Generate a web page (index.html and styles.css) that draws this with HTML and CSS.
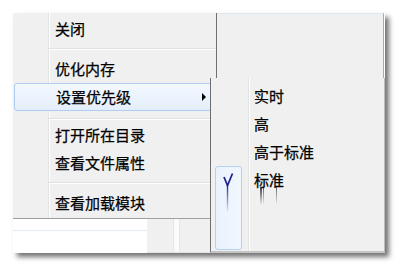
FILE: index.html
```html
<!DOCTYPE html>
<html>
<head>
<meta charset="utf-8">
<link rel="stylesheet" href="styles.css">
</head>
<body>
<div class="stage">
  <div class="backdrop">
    <div class="backdrop-line"></div>
  </div>
  <div class="filler"><span class="streak"></span></div>
  <div class="panel"></div>
  <div class="menu main">
    <div class="item">关闭</div>
    <div class="sep"></div>
    <div class="item">优化内存</div>
    <div class="item active">设置优先级<span class="arrow"></span></div>
    <div class="sep sep-short"></div>
    <div class="item">打开所在目录</div>
    <div class="item">查看文件属性</div>
    <div class="sep"></div>
    <div class="item">查看加载模块</div>
  </div>
  <div class="menu sub">
    <div class="item">实时</div>
    <div class="item">高</div>
    <div class="item">高于标准</div>
    <div class="item checked">标准<span class="ghost"></span></div>
    <div class="checkbox">
      <svg class="check" width="12" height="42" viewBox="0 0 12 42">
        <defs>
          <linearGradient id="fade" x1="0" y1="0" x2="0" y2="1">
            <stop offset="0" stop-color="#23238f"/>
            <stop offset="1" stop-color="#23238f" stop-opacity="0"/>
          </linearGradient>
        </defs>
        <path d="M1 4 L4.5 12.5 L9.5 0.5" fill="none" stroke="#23238f" stroke-width="1.8"/>
        <rect x="3.8" y="12" width="1.4" height="28" fill="url(#fade)"/>
      </svg>
    </div>
  </div>
</div>
</body>
</html>
```
FILE: styles.css
```css
html, body {
  margin: 0;
  padding: 0;
  background: #ffffff;
}
body {
  width: 400px;
  height: 268px;
  overflow: hidden;
  font-family: "Noto Sans CJK SC", "Noto Sans", sans-serif;
  font-size: 15px;
  color: #000;
  -webkit-text-stroke: 0.25px #000;
}
.stage {
  position: relative;
  margin: 13px 0 0 13px;
  width: 372px;
  height: 240px;
  box-shadow: 4px 4px 5px rgba(0, 0, 0, 0.55);
  background: #fff;
}
.backdrop {
  position: absolute;
  left: 0;
  top: 0;
  width: 197px;
  height: 240px;
  background: #fff;
}
.backdrop-line {
  margin-top: 217px;
  width: 134px;
  height: 1px;
  background: #e4ebf2;
}
.filler {
  position: absolute;
  left: 134px;
  top: 205px;
  width: 63px;
  height: 34px;
  background: #f0f0f0;
  border-bottom: 1px solid #e2e2e2;
}
.streak {
  position: absolute;
  left: 26px;
  top: -30px;
  width: 5px;
  height: 64px;
  background: #fbfbfb;
  border-left: 1px solid #e6e6e6;
  border-right: 1px solid #e6e6e6;
  border-radius: 3px;
}
.panel {
  position: absolute;
  left: 204px;
  top: 0;
  width: 167px;
  height: 65px;
  background: #f0f0f0;
  border-top: 1px solid #dde8f3;
  border-right: 1px solid #9aa8d4;
  box-sizing: border-box;
}
.menu {
  position: absolute;
  display: flex;
  flex-direction: column;
  box-sizing: border-box;
  background-color: #f0f0f0;
}
.main {
  left: 0;
  top: 0;
  width: 204px;
  height: 206px;
  padding-top: 2px;
  border-right: 1px solid #707070;
  border-bottom: 1px solid #a0a0a0;
  background-image: linear-gradient(to right, transparent 35px, #e2e3e3 35px, #e2e3e3 36px, #ffffff 36px, #ffffff 37px, transparent 37px);
}
.sub {
  left: 197px;
  top: 65px;
  width: 175px;
  height: 175px;
  padding-top: 4px;
  border-left: 1px solid #6e6e6e;
  border-right: 1px solid #bdbdbd;
  border-bottom: 2px solid #c4c4c4;
  background-image: linear-gradient(to right, transparent 37px, #e2e3e3 37px, #e2e3e3 38px, #ffffff 38px, #ffffff 39px, transparent 39px);
}
.item {
  position: relative;
  height: 28px;
  line-height: 28px;
  padding-left: 42px;
  white-space: nowrap;
  box-sizing: border-box;
}
.sub .item {
  padding-left: 43px;
}
.sep {
  height: 12px;
  margin-left: 36px;
  background: linear-gradient(to bottom, transparent 5px, #e0e0e0 5px, #e0e0e0 6px, #ffffff 6px, #ffffff 7px, transparent 7px);
}
.sep-short {
  height: 10px;
  background: linear-gradient(to bottom, transparent 7px, #e0e0e0 7px, #e0e0e0 8px, #ffffff 8px, #ffffff 9px, transparent 9px);
}
.active {
  margin: 0 3px 0 1px;
  padding-left: 41px;
  border: 1px solid #aecdf1;
  border-radius: 3px;
  line-height: 26px;
  background: linear-gradient(to bottom, #f3f8fe, #e4eefb);
}
.arrow {
  position: absolute;
  right: 6px;
  top: 9px;
  width: 0;
  height: 0;
  border-top: 4px solid transparent;
  border-bottom: 4px solid transparent;
  border-left: 4px solid #000;
}
.ghost {
  position: absolute;
  left: 47px;
  top: 21px;
  width: 22px;
  height: 18px;
  background:
    linear-gradient(to bottom, rgba(0,0,0,0.75), rgba(0,0,0,0)) 2px 0 / 2px 100% no-repeat,
    linear-gradient(to bottom, rgba(0,0,0,0.6), rgba(0,0,0,0)) 5px 0 / 1px 100% no-repeat,
    linear-gradient(to bottom, rgba(0,0,0,0.6), rgba(0,0,0,0)) 18px 0 / 1px 100% no-repeat;
}
.checkbox {
  position: absolute;
  left: 4px;
  top: 88px;
  width: 27px;
  height: 84px;
  box-sizing: border-box;
  border: 1px solid #b3d3f3;
  border-radius: 3px;
  background: linear-gradient(to right, #e9f2fd, #f2f7fe);
}
.check {
  display: block;
  margin: 6px 0 0 7px;
}
```
